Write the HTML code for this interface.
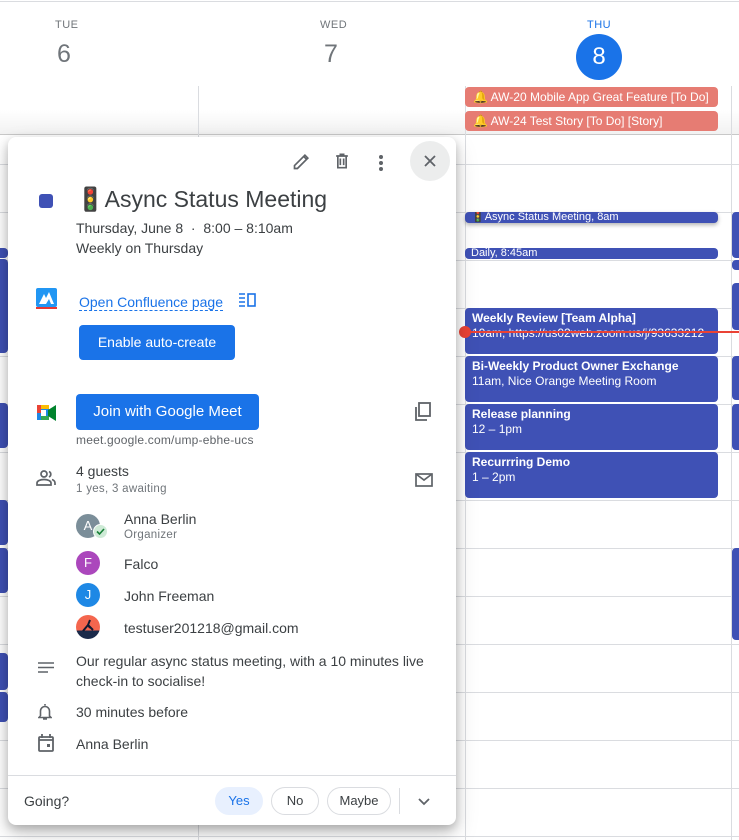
<!DOCTYPE html>
<html><head><meta charset="utf-8"><style>
*{box-sizing:border-box;margin:0;padding:0}
body{width:739px;height:840px;overflow:hidden;background:#fff;font-family:"Liberation Sans",Arial,sans-serif;position:relative;color:#3c4043}
.a{position:absolute}
.hl{position:absolute;left:0;width:739px;height:1px;background:#dadce0}
.vl{position:absolute;top:86px;width:1px;height:754px;background:#dadce0}
.ev{position:absolute;background:#3f51b5;color:#fff;border-radius:4px;font-size:12px;line-height:15px;padding:3px 7px;overflow:hidden;white-space:nowrap}
.ev b{font-weight:bold}
.red{position:absolute;background:#e67c73;color:#fff;border-radius:4px;font-size:12px;line-height:20px;padding:0 8px;white-space:nowrap;left:465px;width:253px;height:20px}
.pop{position:absolute;left:8px;top:137px;width:448px;height:688px;background:#fff;border-radius:8px;box-shadow:0 4px 10px rgba(0,0,0,.25),0 10px 24px rgba(0,0,0,.15)}
.t{position:absolute;white-space:nowrap}
.btn{position:absolute;background:#1a73e8;color:#fff;border-radius:4px;font-size:14px;text-align:center}
.av{position:absolute;width:24px;height:24px;border-radius:50%;color:#fff;font-size:13px;text-align:center;line-height:24px}
.pill{position:absolute;top:650px;height:28px;border-radius:14px;border:1px solid #dadce0;font-size:13px;text-align:center;line-height:26px;color:#3c4043}
</style></head><body>
<div class="hl" style="top:1px"></div>
<div class="a" style="left:0;top:110px;width:739px;height:25px;background:linear-gradient(#fff,#f1f1f1)"></div>
<div class="t" style="left:55px;top:19px;font-size:11px;color:#70757a;letter-spacing:.5px">TUE</div>
<div class="t" style="left:57px;top:40px;font-size:25px;color:#70757a">6</div>
<div class="t" style="left:320px;top:19px;font-size:11px;color:#70757a;letter-spacing:.5px">WED</div>
<div class="t" style="left:324px;top:40px;font-size:25px;color:#70757a">7</div>
<div class="t" style="left:587px;top:19px;font-size:11px;color:#1a73e8;letter-spacing:.5px">THU</div>
<div class="a" style="left:576px;top:34px;width:46px;height:46px;border-radius:50%;background:#1a73e8;color:#fff;font-size:24px;text-align:center;line-height:46px">8</div>
<div class="hl" style="top:134px;background:#c8c8c8"></div>
<div class="vl" style="left:198px"></div><div class="vl" style="left:465px"></div><div class="vl" style="left:731px"></div>
<div class="red" style="top:87px">🔔 AW-20 Mobile App Great Feature [To Do]</div>
<div class="red" style="top:111px">🔔 AW-24 Test Story [To Do] [Story]</div>
<div class="hl" style="top:164px"></div><div class="hl" style="top:212px"></div><div class="hl" style="top:260px"></div><div class="hl" style="top:308px"></div><div class="hl" style="top:356px"></div><div class="hl" style="top:404px"></div><div class="hl" style="top:452px"></div><div class="hl" style="top:500px"></div><div class="hl" style="top:548px"></div><div class="hl" style="top:596px"></div><div class="hl" style="top:644px"></div><div class="hl" style="top:692px"></div><div class="hl" style="top:740px"></div><div class="hl" style="top:788px"></div><div class="hl" style="top:836px"></div>
<!-- left strip -->
<div class="ev" style="left:-10px;top:248px;width:18px;height:10px;padding:0"></div>
<div class="ev" style="left:-10px;top:259px;width:18px;height:94px;padding:0"></div>
<div class="ev" style="left:-10px;top:403px;width:18px;height:45px;padding:0"></div>
<div class="ev" style="left:-10px;top:500px;width:18px;height:45px;padding:0"></div>
<div class="ev" style="left:-10px;top:548px;width:18px;height:45px;padding:0"></div>
<div class="ev" style="left:-10px;top:653px;width:18px;height:37px;padding:0"></div>
<div class="ev" style="left:-10px;top:692px;width:18px;height:30px;padding:0"></div>
<!-- right strip -->
<div class="ev" style="left:732px;top:212px;width:20px;height:46px;padding:0"></div>
<div class="ev" style="left:732px;top:260px;width:20px;height:10px;padding:0"></div>
<div class="ev" style="left:732px;top:283px;width:20px;height:47px;padding:0"></div>
<div class="ev" style="left:732px;top:356px;width:20px;height:44px;padding:0"></div>
<div class="ev" style="left:732px;top:404px;width:20px;height:46px;padding:0"></div>
<div class="ev" style="left:732px;top:548px;width:20px;height:92px;padding:0"></div>
<!-- Thu events -->
<div class="ev" style="left:465px;top:212px;width:253px;height:11px;padding:0 6px;font-size:11px;line-height:11px;box-shadow:0 2px 4px rgba(0,0,0,.3)">🚦Async Status Meeting, 8am</div>
<div class="ev" style="left:465px;top:248px;width:253px;height:11px;padding:0 6px;font-size:11px;line-height:11px">Daily, 8:45am</div>
<div class="ev" style="left:465px;top:308px;width:253px;height:46px"><b>Weekly Review [Team Alpha]</b><br>10am, https://us02web.zoom.us/j/93633212</div>
<div class="a" style="left:465px;top:331px;width:274px;height:2px;background:#ea4335"></div>
<div class="a" style="left:459px;top:326px;width:12px;height:12px;border-radius:50%;background:#ea4335"></div>
<div class="ev" style="left:465px;top:356px;width:253px;height:46px"><b>Bi-Weekly Product Owner Exchange</b><br>11am, Nice Orange Meeting Room</div>
<div class="ev" style="left:465px;top:404px;width:253px;height:46px"><b>Release planning</b><br>12 – 1pm</div>
<div class="ev" style="left:465px;top:452px;width:253px;height:46px"><b>Recurrring Demo</b><br>1 – 2pm</div>

<div class="pop">
 <svg class="a" style="left:284px;top:14px" width="20" height="20" viewBox="0 0 24 24"><path d="M3 21v-3.5L15.5 5l3.5 3.5L6.5 21z M14 6.5l3.5 3.5" fill="none" stroke="#5f6368" stroke-width="2"/></svg>
 <svg class="a" style="left:324px;top:14px" width="20" height="20" viewBox="0 0 24 24"><path d="M5 6h14M9 4h6M7 6v14h10V6M10 9v8M14 9v8" fill="none" stroke="#5f6368" stroke-width="2"/></svg>
 <div class="a" style="left:371px;top:18px;width:4px;height:4px;border-radius:2px;background:#5f6368;box-shadow:0 6px 0 #5f6368,0 12px 0 #5f6368"></div>
 <div class="a" style="left:402px;top:4px;width:40px;height:40px;border-radius:50%;background:#eceded"></div>
 <svg class="a" style="left:414px;top:16px" width="16" height="16" viewBox="0 0 16 16"><path d="M3 3l10 10M13 3L3 13" stroke="#5f6368" stroke-width="1.8"/></svg>
 <div class="a" style="left:31px;top:57px;width:14px;height:14px;border-radius:3px;background:#3f51b5"></div>
 <div class="t" style="left:68px;top:49px;font-size:23px;color:#3c4043;font-family:'Liberation Sans','DejaVu Sans',sans-serif">🚦Async Status Meeting</div>
 <div class="t" style="left:68px;top:83px;font-size:14px">Thursday, June 8 &nbsp;·&nbsp; 8:00 – 8:10am</div>
 <div class="t" style="left:68px;top:103px;font-size:14px">Weekly on Thursday</div>
 <svg class="a" style="left:28px;top:151px" width="21" height="21" viewBox="0 0 21 21"><rect width="21" height="19" rx="2" fill="#2196f3"/><rect y="19" width="21" height="2" fill="#e53935"/><path d="M3 16l5-10 2 4 3-6 5 12h-3l-2-5-3 5z" fill="#fff"/></svg>
 <div class="t" style="left:71px;top:157px;font-size:14px;color:#1a73e8;border-bottom:1px dashed #1a73e8;line-height:16px">Open Confluence page</div>
 <svg class="a" style="left:231px;top:156px" width="18" height="14" viewBox="0 0 18 14"><path d="M0 1h6M0 5h6M0 9h6M0 13h6" stroke="#1a73e8" stroke-width="1.6"/><rect x="9" y="1" width="7" height="12" fill="none" stroke="#1a73e8" stroke-width="1.6"/></svg>
 <div class="btn" style="left:71px;top:188px;width:156px;height:35px;line-height:35px">Enable auto-create</div>
 <svg class="a" style="left:29px;top:268px" width="19" height="16" viewBox="0 0 19 16"><rect x="0" y="3" width="12" height="12" fill="#1e88e5"/><rect x="3" y="0" width="9" height="4" fill="#fbbc04"/><rect x="0" y="0" width="4" height="8" fill="#ea4335"/><rect x="4" y="11" width="8" height="4" fill="#34a853"/><rect x="4" y="5" width="5" height="6" fill="#fff"/><path d="M11 5l8-5v16l-8-5z" fill="#00832d"/></svg>
 <div class="btn" style="left:68px;top:257px;width:183px;height:36px;line-height:36px;font-size:15px">Join with Google Meet</div>
 <svg class="a" style="left:406px;top:265px" width="18" height="20" viewBox="0 0 18 20"><rect x="5" y="1" width="11" height="13" fill="none" stroke="#5f6368" stroke-width="1.8"/><path d="M2 5v13h11" fill="none" stroke="#5f6368" stroke-width="1.8"/></svg>
 <div class="t" style="left:68px;top:296px;font-size:12px;color:#5f6368;letter-spacing:.2px">meet.google.com/ump-ebhe-ucs</div>
 <svg class="a" style="left:28px;top:333px" width="20" height="16" viewBox="0 0 20 16"><circle cx="8" cy="4" r="3" fill="none" stroke="#5f6368" stroke-width="1.7"/><path d="M1 15v-2c0-2 3-3.5 7-3.5s7 1.5 7 3.5v2zM13 1.5a3 3 0 010 5.5M16 9.5c2 .7 3 1.8 3 3.5v2" fill="none" stroke="#5f6368" stroke-width="1.7"/></svg>
 <div class="t" style="left:68px;top:326px;font-size:14px">4 guests</div>
 <div class="t" style="left:68px;top:346px;font-size:11.5px;color:#70757a;letter-spacing:.3px">1 yes, 3 awaiting</div>
 <svg class="a" style="left:407px;top:336px" width="18" height="14" viewBox="0 0 18 14"><rect x="1" y="1" width="16" height="12" fill="none" stroke="#5f6368" stroke-width="1.7"/><path d="M1 1l8 6 8-6" fill="none" stroke="#5f6368" stroke-width="1.7"/></svg>
 <div class="av" style="left:68px;top:377px;background:#7b8e99">A</div>
 <div class="a" style="left:85px;top:387px;width:15px;height:15px;border-radius:50%;background:#ceead6;border:1px solid #fff"></div>
 <svg class="a" style="left:88px;top:391px" width="9" height="7" viewBox="0 0 9 7"><path d="M1 3.5l2.5 2.5L8 1" fill="none" stroke="#188038" stroke-width="1.6"/></svg>
 <div class="t" style="left:116px;top:374px;font-size:14px">Anna Berlin</div>
 <div class="t" style="left:116px;top:392px;font-size:11.5px;color:#70757a;letter-spacing:.3px">Organizer</div>
 <div class="av" style="left:68px;top:414px;background:#ab47bc">F</div>
 <div class="t" style="left:116px;top:419px;font-size:14px">Falco</div>
 <div class="av" style="left:68px;top:446px;background:#1e88e5">J</div>
 <div class="t" style="left:116px;top:451px;font-size:14px">John Freeman</div>
 <div class="av" style="left:68px;top:478px;background:linear-gradient(#f4664e 65%,#1a2a4a 65%)"></div>
 <svg class="a" style="left:73px;top:481px" width="14" height="15" viewBox="0 0 14 15"><path d="M2 13l5-6 2 3M9 2l-2 5 5 5" fill="none" stroke="#101830" stroke-width="2"/></svg>
 <div class="t" style="left:116px;top:483px;font-size:14px">testuser201218@gmail.com</div>
 <svg class="a" style="left:30px;top:525px" width="16" height="12" viewBox="0 0 16 12"><path d="M0 1h16M0 5.5h16M0 10h10" stroke="#5f6368" stroke-width="1.6"/></svg>
 <div class="a" style="left:68px;top:514px;width:370px;font-size:14px;line-height:20px">Our regular async status meeting, with a 10 minutes live check-in to socialise!</div>
 <svg class="a" style="left:30px;top:566px" width="14" height="17" viewBox="0 0 14 17"><path d="M7 1v1.5M2.5 13V8a4.5 4.5 0 019 0v5l1.5 1.5H1L2.5 13M5 16h4" fill="none" stroke="#5f6368" stroke-width="1.6"/></svg>
 <div class="t" style="left:68px;top:567px;font-size:14px">30 minutes before</div>
 <svg class="a" style="left:30px;top:597px" width="16" height="18" viewBox="0 0 16 18"><rect x="1" y="3" width="14" height="14" rx="1" fill="none" stroke="#5f6368" stroke-width="1.8"/><path d="M1 6h14M4 0v4M12 0v4" stroke="#5f6368" stroke-width="1.8"/><rect x="9" y="10" width="3" height="3" fill="#5f6368"/></svg>
 <div class="t" style="left:68px;top:599px;font-size:14px">Anna Berlin</div>
 <div class="a" style="left:0;top:638px;width:448px;height:1px;background:#dadce0"></div>
 <div class="t" style="left:16px;top:656px;font-size:14px">Going?</div>
 <div class="pill" style="left:207px;width:48px;border-color:#e8f0fe;background:#e8f0fe;color:#1a73e8">Yes</div>
 <div class="pill" style="left:263px;width:48px">No</div>
 <div class="pill" style="left:319px;width:64px">Maybe</div>
 <div class="a" style="left:391px;top:651px;width:1px;height:26px;background:#dadce0"></div>
 <svg class="a" style="left:409px;top:659px" width="14" height="10" viewBox="0 0 14 10"><path d="M2 3l5 5 5-5" fill="none" stroke="#5f6368" stroke-width="1.8"/></svg>
</div>
</body></html>
